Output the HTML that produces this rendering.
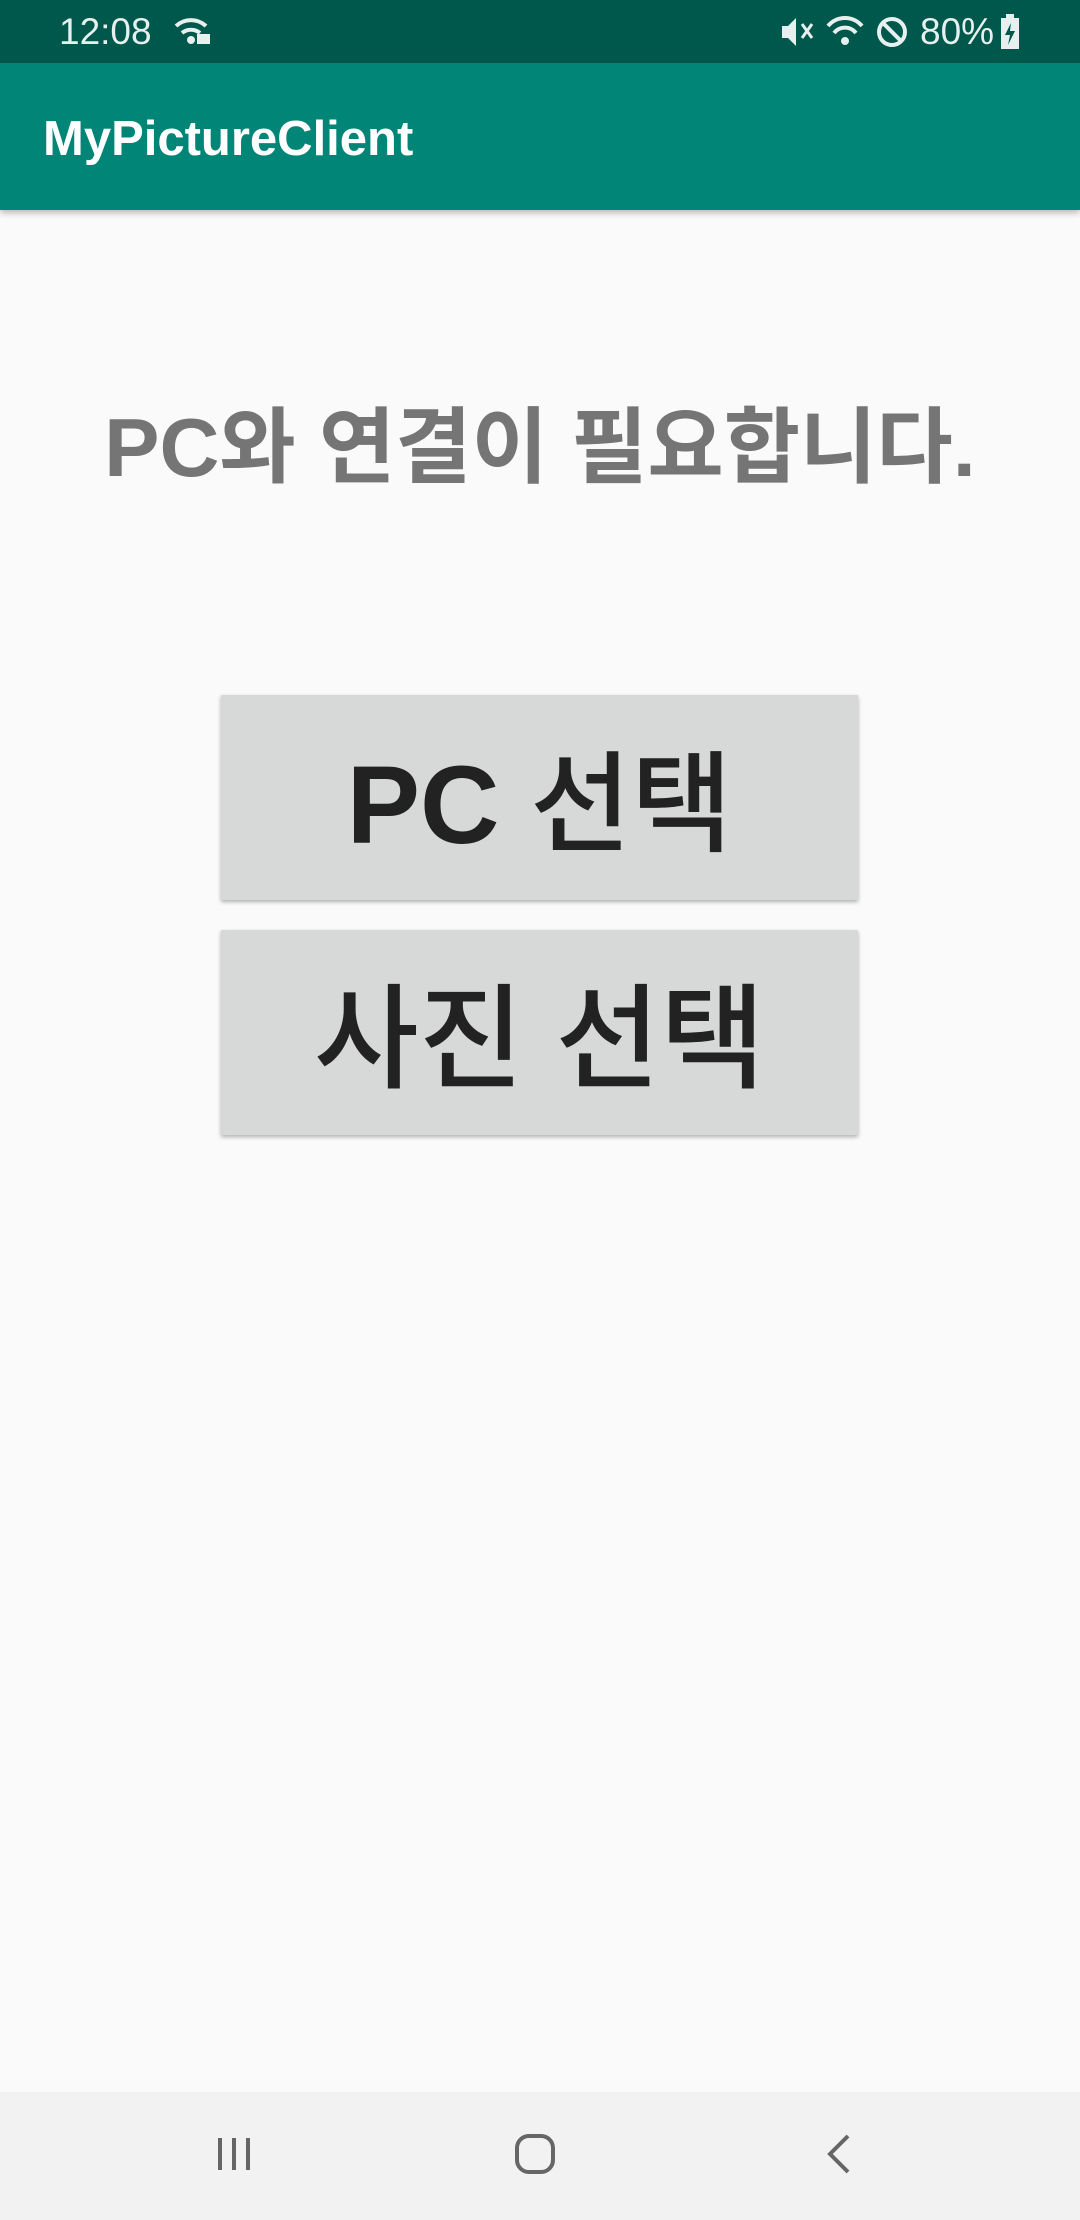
<!DOCTYPE html>
<html><head><meta charset="utf-8"><style>
html,body{margin:0;padding:0;width:1080px;height:2220px;background:#fafafa;overflow:hidden;font-family:"Liberation Sans","Noto Sans CJK KR",sans-serif;}
.status{position:absolute;left:0;top:0;width:1080px;height:63px;background:#00574b;color:#e6f0ee;font-size:37px;}
.appbar{position:absolute;left:0;top:63px;width:1080px;height:147px;background:#008577;box-shadow:0 3px 6px rgba(0,0,0,.25);}
.title{position:absolute;left:43px;top:109px;color:#fff;font-size:49px;line-height:60px;font-weight:bold;}
.msg{position:absolute;left:0;top:398px;width:1080px;text-align:center;color:#757575;font-weight:bold;font-size:83px;line-height:100px;}
.btn{position:absolute;left:221px;width:637px;height:205px;background:#d7d8d8;box-shadow:0 2px 4px rgba(0,0,0,.3);text-align:center;color:#222;font-size:110px;line-height:221px;font-weight:500;}
.btn b{font-weight:bold;}
.nav{position:absolute;left:0;top:2092px;width:1080px;height:128px;background:#f2f2f2;}
</style></head><body>
<div class="status">
<span style="position:absolute;left:59px;top:11px">12:08</span>
<svg style="position:absolute;left:172px;top:16px" width="40" height="32" viewBox="0 0 40 32"><path d="M4 10 A22 22 0 0 1 34 10" stroke="#e6f0ee" stroke-width="4" fill="none"/><path d="M10 17 A14 14 0 0 1 28 17" stroke="#e6f0ee" stroke-width="4" fill="none"/><circle cx="19" cy="24" r="4" fill="#e6f0ee"/><rect x="25" y="18" width="13" height="10" fill="#e6f0ee"/></svg>
<svg style="position:absolute;left:780px;top:14px" width="240" height="36" viewBox="0 0 240 36"><path d="M2 12h6l8-8v28l-8-8H2z" fill="#e6f0ee"/><path d="M22 10l10 14M32 10L22 24" stroke="#e6f0ee" stroke-width="3"/><path d="M48 12 A22 22 0 0 1 82 12" stroke="#e6f0ee" stroke-width="4" fill="none"/><path d="M54 19 A14 14 0 0 1 76 19" stroke="#e6f0ee" stroke-width="4" fill="none"/><circle cx="65" cy="27" r="4" fill="#e6f0ee"/><circle cx="112" cy="18" r="13" stroke="#e6f0ee" stroke-width="4" fill="none"/><path d="M103 9l18 18" stroke="#e6f0ee" stroke-width="4"/></svg>
<span style="position:absolute;left:920px;top:11px">80%</span>
<svg style="position:absolute;left:1000px;top:14px" width="20" height="36" viewBox="0 0 20 36"><rect x="6" y="0" width="8" height="4" fill="#e6f0ee"/><rect x="1" y="4" width="18" height="31" fill="#e6f0ee"/><path d="M11 9l-6 12h5l-2 10 7-14h-5z" fill="#00574b"/></svg>
</div>
<div class="appbar"></div>
<div class="title">MyPictureClient</div>
<div class="msg">PC와 연결이 필요합니다.</div>
<div class="btn" style="top:695px"><b>PC</b> 선택</div>
<div class="btn" style="top:930px;font-size:114px">사진 선택</div>
<div class="nav">
<svg style="position:absolute;left:214px;top:42px" width="40" height="40" viewBox="0 0 40 40"><path d="M6 4v32M20 4v32M34 4v32" stroke="#666" stroke-width="4"/></svg>
<svg style="position:absolute;left:513px;top:40px" width="44" height="44" viewBox="0 0 44 44"><rect x="4" y="4" width="36" height="36" rx="12" stroke="#666" stroke-width="4" fill="none"/></svg>
<svg style="position:absolute;left:824px;top:40px" width="30" height="44" viewBox="0 0 30 44"><path d="M24 4L6 22l18 18" stroke="#666" stroke-width="4" fill="none"/></svg>
</div>
</body></html>
